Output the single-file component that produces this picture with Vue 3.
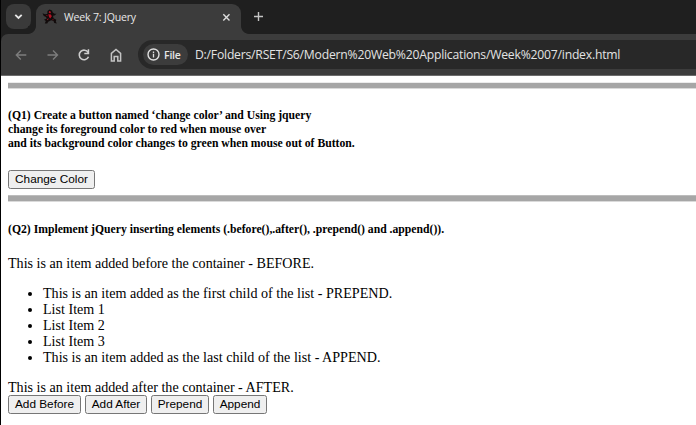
<script setup>
const listItems = [
  'This is an item added as the first child of the list - PREPEND.',
  'List Item 1',
  'List Item 2',
  'List Item 3',
  'This is an item added as the last child of the list - APPEND.',
]
const actions = [
  { label: 'Add Before', cls: 'w-before' },
  { label: 'Add After', cls: 'w-after' },
  { label: 'Prepend', cls: 'w-prepend' },
  { label: 'Append', cls: 'w-append' },
]
</script>

<template>
  <div class="window">
    <header class="tabstrip">
      <button class="search" aria-label="Search tabs">
        <svg width="25" height="25" viewBox="0 0 25 25"><path d="M9.3 10.8l3.2 3.2 3.2-3.2" fill="none" stroke="#e6e6e6" stroke-width="1.8" /></svg>
      </button>
      <div class="tab">
        <svg class="favicon" width="16" height="16" viewBox="0 0 16 16">
          <path d="M5.5 2l2-1.5 2.5 1 .7 2 1.8 1.2 2 .1-2 1.6-1.5.3.5 2.6 2.8 1.5-.5 1.7 1 2-2.5-.6-.8-2-2.3-.6-3 1.4-1 1.8H2.8l1-2.6L2 10.8l2.7-1.3L4 8 1.8 7 .5 4.2 3 5.3l2.3-.2z" fill="#110b0b" />
          <path d="M7 2l2 .8-.4 1.5-1.8-.4zM6.3 5.2l2.6.2.9 1.8-1.6 2.3-1.2-1.6zM3.8 6l1.5.3.3 1.2zM5 10l2-.6-1.4 1.8zM10.5 9.8l1.3 1.3-1 .2z" fill="#b51225" />
        </svg>
        <span class="tab-title">Week 7: JQuery</span>
        <svg class="close" width="9" height="9" viewBox="0 0 9 9"><path d="M1.3 1.3l6.2 6.2M7.5 1.3L1.3 7.5" stroke="#dedede" stroke-width="1.4" /></svg>
      </div>
      <svg class="plus" width="11" height="11" viewBox="0 0 11 11"><path d="M5.5 1v9M1 5.5h9" stroke="#c4c4c4" stroke-width="1.4" /></svg>
    </header>

    <div class="toolbar-bed">
      <nav class="toolbar">
        <svg class="nav-icon" width="14" height="14" viewBox="0 0 14 14"><path d="M12.3 7H2.3M6.8 2.5L2.3 7l4.5 4.5" fill="none" stroke="#7d7d7d" stroke-width="1.4" /></svg>
        <svg class="nav-icon" width="14" height="14" viewBox="0 0 14 14"><path d="M1.5 7h10M7 2.5L11.5 7 7 11.5" fill="none" stroke="#7d7d7d" stroke-width="1.4" /></svg>
        <svg class="nav-icon" width="14" height="14" viewBox="0 0 14 14">
          <path d="M11.2 4.5A4.8 4.8 0 1 0 11.5 8.8" fill="none" stroke="#cecece" stroke-width="1.6" />
          <path d="M12.2 1.2v5H7.3V4.7h3.4V1.2z" fill="#cecece" />
        </svg>
        <svg class="nav-icon" width="14" height="14" viewBox="0 0 14 14"><path d="M2.4 5.3L7 1.5l4.6 3.8v7.6H8.8V8.4H5.2v4.5H2.4z" fill="none" stroke="#c4c4c4" stroke-width="1.5" /></svg>
        <div class="omnibox">
          <span class="chip">
            <svg width="13" height="13" viewBox="0 0 13 13"><circle cx="6.5" cy="6.5" r="5.5" fill="none" stroke="#e0e0e0" stroke-width="1.4" /><path d="M6.5 5.8v3.6M6.5 3.5v1.4" stroke="#e0e0e0" stroke-width="1.3" /></svg>
            <span class="chip-label">File</span>
          </span>
          <span class="url">D:/Folders/RSET/S6/Modern%20Web%20Applications/Week%2007/index.html</span>
        </div>
      </nav>
    </div>

    <main class="page">
      <div class="rule"></div>
      <h5 class="q1">(Q1) Create a button named ‘change color’ and Using jquery<br />change its foreground color to red when mouse over<br />and its background color changes to green when mouse out of Button.</h5>
      <button class="btn w-color">Change Color</button>
      <div class="rule second"></div>
      <h5 class="q2">(Q2) Implement jQuery inserting elements (.before(),.after(), .prepend() and .append()).</h5>
      <p class="before">This is an item added before the container - BEFORE.</p>
      <ul>
        <li v-for="item in listItems" :key="item">{{ item }}</li>
      </ul>
      <p class="after">This is an item added after the container - AFTER.</p>
      <div class="actions">
        <button v-for="a in actions" :key="a.label" class="btn" :class="a.cls">{{ a.label }}</button>
      </div>
    </main>
  </div>
</template>

<style>
body {
  margin: 0;
  background: #fff;
}
</style>

<style scoped>
* {
  box-sizing: border-box;
}
.window {
  width: 696px;
  height: 425px;
  overflow: hidden;
  border-left: 1px solid #000;
  background: #fff;
}
svg {
  display: block;
  flex: none;
}
.tabstrip {
  height: 34px;
  display: flex;
  align-items: flex-start;
  padding: 4px 0 0 5px;
  background: #1f1f1f;
}
.search {
  width: 25px;
  height: 25px;
  padding: 0;
  border: 0;
  border-radius: 8px;
  background: #3a3a3a;
}
.tab {
  position: relative;
  width: 205px;
  height: 30px;
  margin-left: 5px;
  padding: 0 10px 4px 6px;
  display: flex;
  align-items: center;
  background: #3c3c3c;
  border-radius: 9px 9px 0 0;
}
.tab::before,
.tab::after {
  content: '';
  position: absolute;
  bottom: 0;
  width: 8px;
  height: 8px;
}
.tab::before {
  left: -8px;
  background: radial-gradient(circle at 0 0, #1f1f1f 7.5px, #3c3c3c 8.3px);
}
.tab::after {
  right: -8px;
  background: radial-gradient(circle at 100% 0, #1f1f1f 7.5px, #3c3c3c 8.3px);
}
.tab-title {
  margin-left: 6px;
  flex: 1;
  font: 10.6px/14px "Open Sans", "Noto Sans", sans-serif;
  letter-spacing: -0.2px;
  color: #e8e8e8;
  white-space: nowrap;
}
.plus {
  margin: 7px 0 0 12px;
}
.toolbar-bed {
  background: #1f1f1f;
}
.toolbar {
  height: 42px;
  display: flex;
  align-items: center;
  padding-left: 13px;
  background: #3c3c3c;
  border-bottom: 1px solid #6c6c6c;
  border-top-left-radius: 7px;
}
.nav-icon {
  margin-right: 17.6px;
}
.omnibox {
  flex: 1;
  min-width: 0;
  height: 29px;
  margin-left: -2.4px;
  display: flex;
  align-items: center;
  padding-left: 5px;
  background: #282828;
  border-radius: 15px 0 0 15px;
}
.chip {
  width: 45px;
  height: 21px;
  display: flex;
  align-items: center;
  padding-left: 4px;
  border-radius: 11px;
  background: #3c3c3c;
}
.chip-label {
  margin-left: 4px;
  font: 600 10.5px/14px "Open Sans", sans-serif;
  letter-spacing: -0.2px;
  color: #e6e6e6;
}
.url {
  margin-left: 7px;
  font: 12.2px/16px "Open Sans", "Noto Sans", sans-serif;
  letter-spacing: -0.22px;
  color: #e3e3e3;
  white-space: nowrap;
}
.page {
  padding: 6px 0 0 7px;
  font: 14.1px/16px "Liberation Serif", serif;
  color: #000;
}
.rule {
  height: 7px;
  background: #a6a6a6;
  border-top: 1px solid #ececec;
  border-bottom: 1px solid #dadada;
}
h5 {
  margin: 0;
  font: bold 11.7px/14px "Liberation Serif", serif;
  white-space: nowrap;
}
.q1 {
  margin-top: 20px;
  margin-bottom: 19px;
}
.second {
  margin-top: 6px;
  border-top-color: #bcbcbc;
}
.q2 {
  margin-top: 21px;
}
p {
  margin: 0;
}
.before {
  margin-top: 18px;
}
ul {
  margin: 15px 0 13px;
  padding-left: 35px;
}
li {
  line-height: 15.9px;
}
.btn {
  display: block;
  height: 19px;
  padding: 0 0 1px;
  border: 1px solid #767676;
  border-radius: 2.5px;
  background: #efefef;
  color: #000;
  font: 11.8px/16px "Liberation Sans", Arial, sans-serif;
  white-space: nowrap;
}
.w-color {
  width: 87px;
}
.actions {
  display: flex;
  gap: 4px;
}
.w-before {
  width: 73px;
}
.w-after {
  width: 62px;
}
.w-prepend {
  width: 58px;
}
.w-append {
  width: 54px;
}
</style>
